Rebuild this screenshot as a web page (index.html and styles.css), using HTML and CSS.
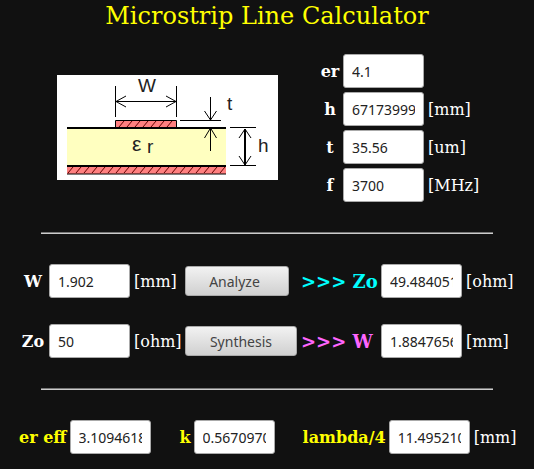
FILE: index.html
```html
<!DOCTYPE html>
<html>
<head>
    <title>Microstrip Line Calculator</title>
    <link rel="stylesheet" href="styles.css">
</head>
<body>
    <h1>Microstrip Line Calculator</h1>

    <div class="top">
        <svg class="diagram" width="221" height="105" viewBox="0 0 221 105">
            <rect width="221" height="105" fill="#fff"/>
            <!-- dielectric and ground plane -->
            <rect x="10" y="53" width="159" height="37" fill="#ffffc0"/>
            <rect x="10" y="91" width="159" height="8" fill="#ff8080"/>
            <path d="M11 98l5-6M19 98l5-6M27 98l5-6M35 98l5-6M43 98l5-6M51 98l5-6M59 98l5-6M67 98l5-6M75 98l5-6M83 98l5-6M91 98l5-6M99 98l5-6M107 98l5-6M115 98l5-6M123 98l5-6M131 98l5-6M139 98l5-6M147 98l5-6M155 98l5-6M163 98l5-6" stroke="#600" fill="none"/>
            <path d="M10 91h159" stroke="#000" stroke-width="2" fill="none"/>
            <path d="M10 99h159" stroke="#000" fill="none"/>
            <!-- strip -->
            <rect x="59" y="46" width="60" height="7" fill="#ff8080"/>
            <path d="M62 52l5-6M70 52l5-6M78 52l5-6M86 52l5-6M94 52l5-6M102 52l5-6M110 52l5-6" stroke="#600" fill="none"/>
            <path d="M58.500 52v-6.500h61v6.500" stroke="#000" fill="none"/>
            <path d="M10 53h159" stroke="#000" stroke-width="2" fill="none"/>
            <!-- dimensions -->
            <path d="M58.500 11v31M119.500 11v31M59 26.500h60M69 21l-10 5.500 10 5.500M109 21l10 5.500-10 5.500" stroke="#000" fill="none"/>
            <path d="M123 45.500h41M173 52.500h26M173 90.500h26M153.500 22v23M153.500 53v23M147.500 36l6 9 6-9M147.500 63l6-10 6 10" stroke="#000" fill="none"/>
            <path d="M188 54v36" stroke="#000" stroke-width="2" fill="none"/>
            <path d="M182 63l6-9 6 9M182 81l6 9 6-9" stroke="#000" fill="none"/>
            <text class="diagram-text" x="81" y="17">W</text>
            <text class="diagram-text" x="170" y="35">t</text>
            <text class="diagram-text" x="201" y="77">h</text>
            <text class="diagram-text epsilon" x="75" y="76">ε</text>
            <text class="diagram-text" x="90" y="78">r</text>
        </svg>

        <div class="params">
            <div class="param"><b class="param-name">er</b><input type="text" value="4.1"></div>
            <div class="param"><b class="param-name">h</b><input type="text" value="67173999"><span>[mm]</span></div>
            <div class="param"><b class="param-name">t</b><input type="text" value="35.56"><span>[um]</span></div>
            <div class="param"><b class="param-name">f</b><input type="text" value="3700"><span>[MHz]</span></div>
        </div>
    </div>

    <hr>

    <div class="calc">
        <b class="calc-name">W</b>
        <input type="text" value="1.902">
        <span class="unit">[mm]</span>
        <button class="analyze">Analyze</button>
        <b class="result cyan">&gt;&gt;&gt; Zo</b>
        <input type="text" value="49.484051">
        <span class="end">[ohm]</span>
    </div>

    <div class="calc">
        <b class="calc-name">Zo</b>
        <input type="text" value="50">
        <span class="unit">[ohm]</span>
        <button class="synthesis">Synthesis</button>
        <b class="result pink">&gt;&gt;&gt; W</b>
        <input type="text" value="1.8847656">
        <span class="end">[mm]</span>
    </div>

    <hr class="second">

    <div class="bottom">
        <b>er eff</b>
        <input type="text" value="3.1094618">
        <b class="k">k</b>
        <input type="text" value="0.5670970">
        <b class="lambda">lambda/4</b>
        <input type="text" value="11.495210">
        <span>[mm]</span>
    </div>
</body>
</html>
```

FILE: styles.css
```css
body {
    font-family: "DejaVu Serif", serif;
    font-size: 16px;
    background-color: #111;
    color: #fff;
    margin: 0;
    padding: 0;
}

h1 {
    color: #ff0;
    font-size: 24px;
    font-weight: normal;
    text-align: center;
    margin: 0;
    height: 54px;
    line-height: 32px;
}

input {
    box-sizing: border-box;
    width: 81px;
    height: 34px;
    padding: 0 8px;
    border: 1px solid #aaa;
    border-radius: 3px;
    background-color: #fff;
    color: #222;
    font-family: "Noto Sans", sans-serif;
    font-size: 14px;
}

button {
    height: 30px;
    padding: 0;
    border: 1px solid #aaa;
    border-radius: 3px;
    background: linear-gradient(#f2f2f2, #d0d0d0);
    color: #444;
    font-family: "Noto Sans", sans-serif;
    font-size: 14px;
}

hr {
    box-sizing: border-box;
    width: 452px;
    height: 2px;
    margin: 0 0 0 41px;
    border: none;
    border-top: 1px solid #777;
    background-color: #ccc;
}

.top {
    display: flex;
    height: 178px;
}

.diagram {
    margin: 21px 0 0 57px;
}

.diagram-text {
    font-family: "Liberation Sans", sans-serif;
    font-size: 19px;
    fill: #222;
}

.epsilon {
    font-size: 21px;
}

.params {
    margin-left: 39px;
    width: 190px;
}

.param {
    display: flex;
    align-items: center;
    height: 34px;
    margin-bottom: 4px;
}

.param-name {
    width: 26px;
    text-align: center;
}

.param span {
    margin-left: 4px;
}

.calc {
    display: flex;
    align-items: center;
    height: 34px;
    margin-top: 30px;
}

.calc + .calc {
    margin-top: 26px;
}

.calc-name {
    width: 49px;
    text-align: center;
    padding-left: 17px;
    box-sizing: border-box;
}

.unit {
    width: 51px;
    margin-left: 4px;
}

.analyze {
    width: 104px;
    padding-right: 5px;
}

.synthesis {
    width: 112px;
}

.result {
    width: 80px;
    margin-left: 12px;
    font-size: 18px;
    white-space: nowrap;
}

.synthesis + .result {
    margin-left: 4px;
}

.end {
    margin-left: 4px;
}

.cyan {
    color: #0ff;
}

.pink {
    color: #f6f;
}

hr.second {
    margin-top: 30px;
}

.bottom {
    display: flex;
    align-items: center;
    height: 34px;
    margin-top: 30px;
    padding-left: 19px;
    color: #ff0;
}

.bottom input {
    margin-left: 3px;
}

.bottom span {
    color: #fff;
    margin-left: 4px;
}

.k {
    margin-left: 29px;
}

.lambda {
    margin-left: 28px;
}
```
